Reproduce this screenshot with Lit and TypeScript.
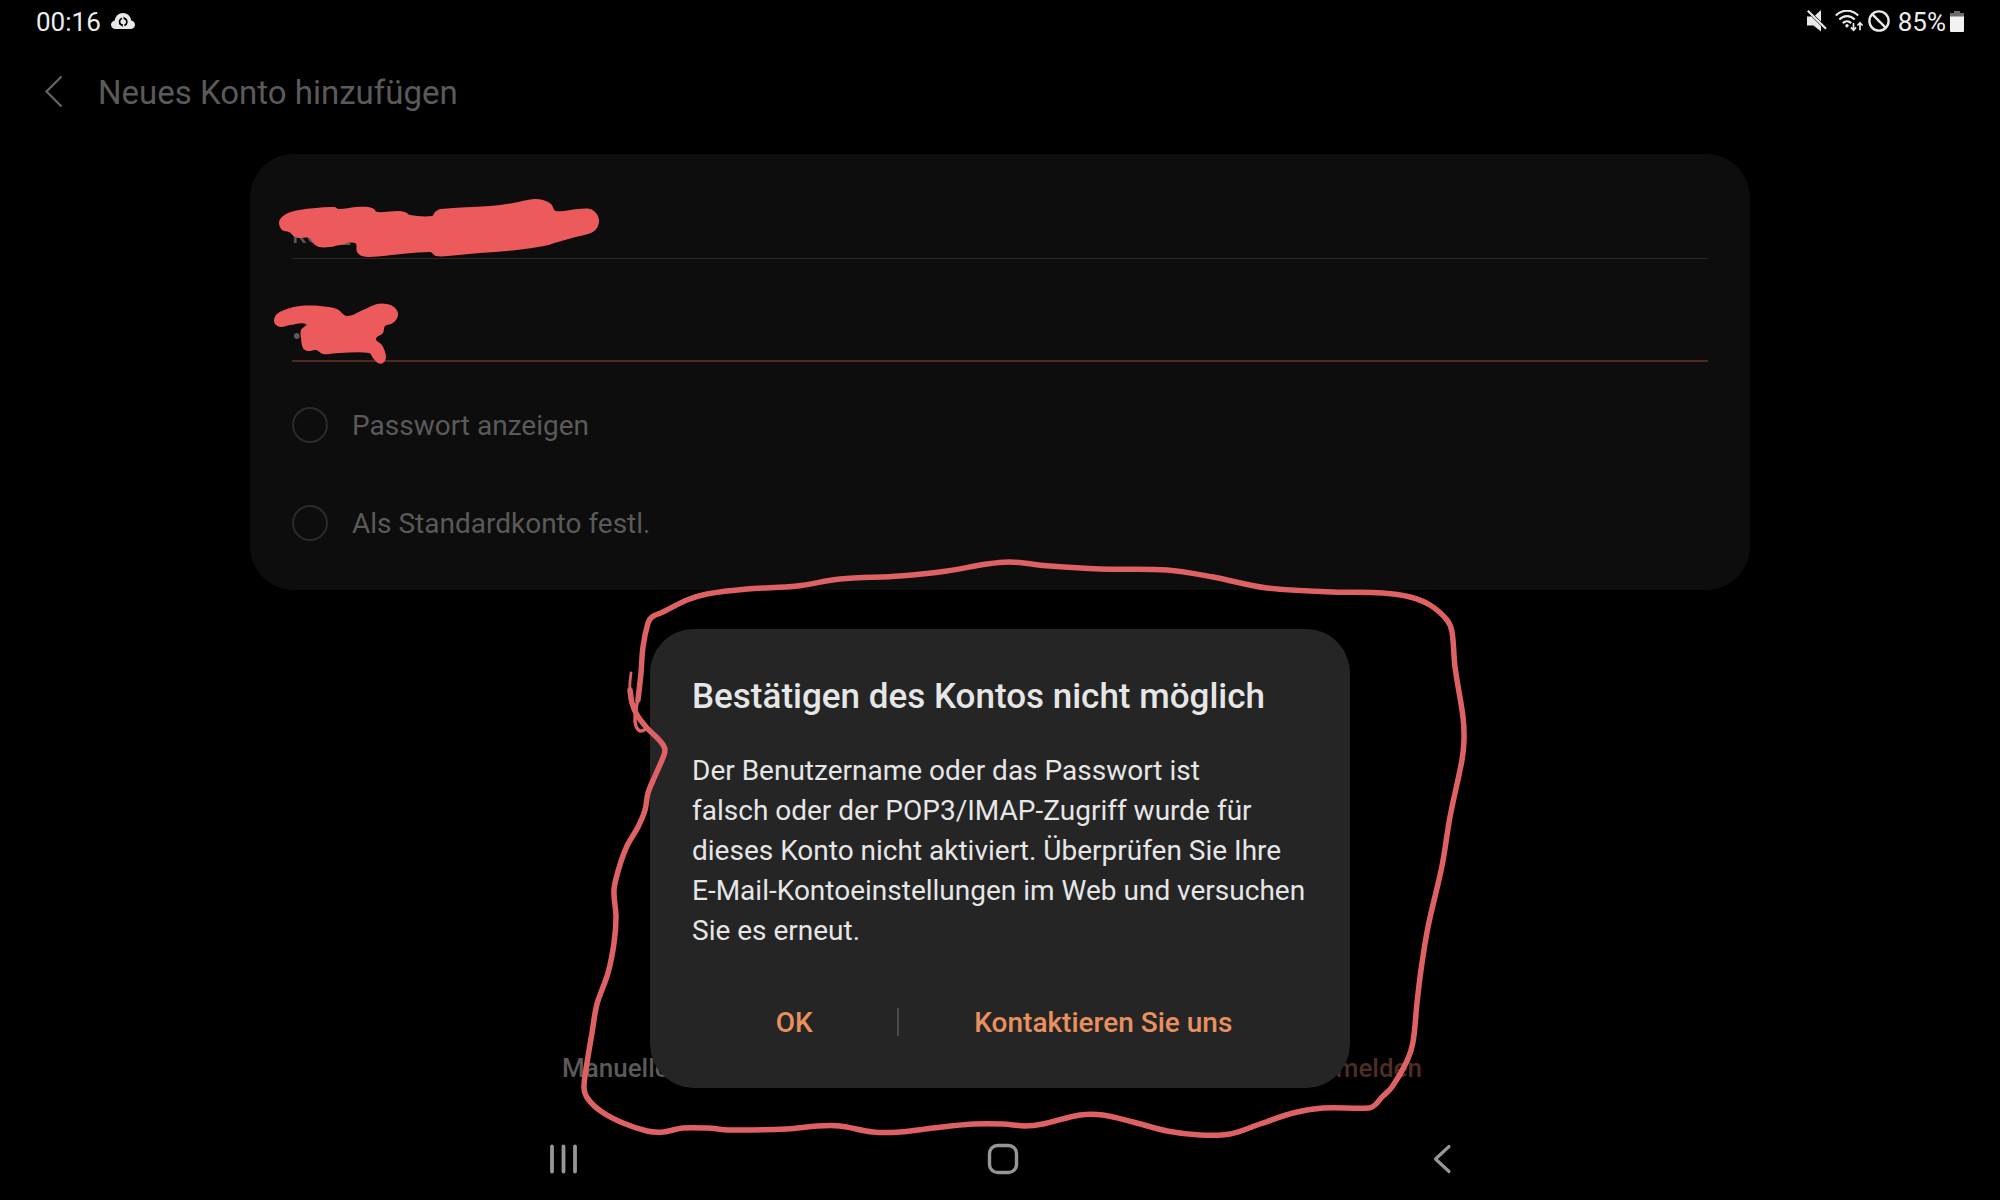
import { LitElement, html, svg, css } from "lit";
import { customElement, state } from "lit/decorators.js";

type Point = [number, number];

/**
 * Turns a list of points into a smooth path. Each tangent follows the
 * neighbouring points, and each handle is a third of its own segment.
 */
function smooth(points: Point[], closed = false): string {
  const n = points.length;
  const at = (i: number): Point =>
    closed ? points[(i + n) % n] : points[Math.max(0, Math.min(n - 1, i))];
  const tangent = (i: number): Point => {
    const a = at(i - 1);
    const c = at(i + 1);
    const len = Math.hypot(c[0] - a[0], c[1] - a[1]) || 1;
    return [(c[0] - a[0]) / len, (c[1] - a[1]) / len];
  };
  let d = `M${points[0][0]} ${points[0][1]}`;
  const last = closed ? n : n - 1;
  for (let i = 0; i < last; i++) {
    const b = at(i);
    const c = at(i + 1);
    const h = Math.hypot(c[0] - b[0], c[1] - b[1]) / 3;
    const s = tangent(i);
    const e = tangent(i + 1);
    d += `C${(b[0] + s[0] * h).toFixed(1)} ${(b[1] + s[1] * h).toFixed(1)} ${(c[0] - e[0] * h).toFixed(1)} ${(c[1] - e[1] * h).toFixed(1)} ${c[0]} ${c[1]}`;
  }
  return closed ? d + "Z" : d;
}

const RING: Point[] = [
  [630, 690], [632, 703], [637, 715], [647, 728], [661, 742], [665, 750], [662, 760], [655, 776],
  [648, 793], [645, 810], [638, 827], [627, 846], [619, 868], [614, 890], [616, 917], [614, 943],
  [608, 973], [597, 1004], [592, 1033], [587, 1063], [584, 1088], [588, 1099], [602, 1112],
  [623, 1123], [647, 1131], [663, 1132], [683, 1128], [707, 1128], [730, 1130], [787, 1129],
  [817, 1126], [840, 1126], [873, 1132], [900, 1132], [933, 1128], [973, 1124], [1003, 1124],
  [1025, 1126], [1043, 1124], [1080, 1115], [1103, 1115], [1133, 1122], [1167, 1131], [1200, 1135],
  [1230, 1134], [1260, 1124], [1293, 1113], [1323, 1108], [1369, 1108], [1375, 1105], [1382, 1097],
  [1392, 1087], [1407, 1061], [1413, 1042], [1417, 1003], [1421, 970], [1428, 927], [1442, 866],
  [1450, 817], [1462, 760], [1464, 740], [1463, 717], [1455, 667], [1452, 632], [1447, 620],
  [1430, 605], [1410, 597], [1383, 593], [1333, 592], [1267, 588], [1213, 577], [1167, 570],
  [1100, 569], [1050, 566], [1010, 562], [987, 564], [947, 571], [900, 576], [840, 579],
  [797, 586], [747, 589], [707, 594], [687, 600], [663, 612], [652, 617], [648, 623],
  [643, 647], [641, 673], [638, 700],
];
const RING_START: Point[] = [[631, 673], [630, 682], [630, 690], [632, 703]];
const RING_END: Point[] = [[638, 698], [635, 717], [636, 726], [640, 731], [646, 729]];

const MARK_TOP: Point[] = [
  [279, 223], [281, 218], [288, 213], [299, 210], [316, 208], [334, 207], [339, 209], [356, 207],
  [368, 207], [374, 209], [377, 212], [398, 211], [405, 212], [410, 215], [432, 216], [435, 212],
  [441, 209], [490, 206], [513, 203], [534, 199], [543, 200], [551, 204], [556, 211], [578, 209],
  [590, 209], [596, 213], [599, 220], [597, 228], [591, 233], [572, 238], [558, 242], [544, 246],
  [517, 250], [480, 253], [448, 256], [436, 256], [430, 252], [370, 257], [362, 256], [357, 252],
  [355, 243], [340, 245], [330, 247], [319, 247], [314, 244], [309, 238], [300, 238], [295, 237],
  [289, 232], [282, 230],
];
const MARK_BOTTOM: Point[] = [
  [274, 320], [277, 314], [287, 309], [300, 306], [320, 306], [337, 309], [347, 316], [363, 310],
  [377, 304], [387, 304], [394, 307], [398, 313], [396, 320], [391, 324], [385, 326], [383, 333],
  [376, 339], [382, 345], [386, 357], [383, 363], [378, 363], [373, 358], [369, 353], [340, 353],
  [323, 354], [316, 350], [308, 351], [303, 348], [301, 338], [301, 330], [306, 324], [290, 325],
  [281, 327], [276, 325],
];

const cloudIcon = html`<svg class="cloud" viewBox="0 0 24 16" aria-hidden="true">
  <path fill="#e9e9e9" d="M4.600 16C2 16 0 14.300 0 11.700 0 9.500 1.600 7.700 3.800 7.400 4.300 3.200 7.800 0 12 0s7.700 3.200 8.200 7.400C22.400 7.700 24 9.500 24 11.700 24 14.300 22 16 19.400 16z"/>
  <path fill="none" stroke="#050505" stroke-width="1.700" d="M11 5.200A3.700 3.700 0 0 0 10.200 11.800M13.400 12.400A3.700 3.700 0 0 0 14.200 5.800"/>
  <path fill="#050505" d="M8.200 11h3.600v3zM16.200 6.600h-3.600v-3z"/>
</svg>`;

const muteIcon = html`<svg class="mute" viewBox="0 0 20 22" aria-hidden="true">
  <path fill="#e9e9e9" d="M0 6.500h4.500L14 16v5.500L6.500 15.500H0zM8 5.500L14 0v11.500z"/>
  <path fill="none" stroke="#e9e9e9" stroke-width="2.200" d="M.8 .8L19 18.800"/>
</svg>`;

const wifiIcon = html`<svg class="wifi" viewBox="0 0 28 22" aria-hidden="true">
  <g fill="none" stroke="#e9e9e9" stroke-width="2.200">
    <path d="M.8 5.600C7 -.9 17 -.9 23.200 5.600"/>
    <path d="M4.300 9.600C8.700 5 15.300 5 19.700 9.600"/>
    <path d="M7.800 13.100C10.300 10.600 13.700 10.600 16.200 13.100"/>
  </g>
  <circle cx="12" cy="15.800" r="1.700" fill="#e9e9e9"/>
  <path fill="none" stroke="#e9e9e9" stroke-width="1.700" d="M18.500 13v7M15.900 17.400l2.600 2.800 2.600-2.800M25 20.200v-7M22.400 15.500l2.600-2.800 2.600 2.800"/>
</svg>`;

const banIcon = html`<svg class="ban" viewBox="0 0 22 22" aria-hidden="true">
  <g fill="none" stroke="#e9e9e9" stroke-width="2.400">
    <circle cx="11" cy="11" r="9.600"/><path d="M4.200 4.200l13.600 13.600"/>
  </g>
</svg>`;

const batteryIcon = html`<svg class="battery" viewBox="0 0 14 21" aria-hidden="true">
  <path fill="#6c6c6c" d="M4 0h6v2h4v4H0V2h4z"/>
  <path fill="#f2f2f2" d="M0 5.500h14V20a1 1 0 0 1-1 1H1a1 1 0 0 1-1-1z"/>
</svg>`;

@customElement("app-root")
export class AppRoot extends LitElement {
  @state() private options = [
    { id: "show-password", label: "Passwort anzeigen" },
    { id: "default-account", label: "Als Standardkonto festl." },
  ];

  static styles = css`
    :host {
      display: flex;
      flex-direction: column;
      position: relative;
      min-height: 100vh;
      box-sizing: border-box;
      overflow: hidden;
      background: #000;
      color: #5a5a5a;
      font-family: Roboto, "Liberation Sans", sans-serif;
      font-size: 28px;
      line-height: 40px;
    }
    svg { display: block; flex: none; }
    button {
      margin: 0;
      padding: 0;
      border: 0;
      background: none;
      color: inherit;
      font: inherit;
    }
    .status {
      display: flex;
      justify-content: space-between;
      align-items: center;
      height: 42px;
      padding: 0 36px;
      color: #ececec;
      font-size: 26px;
    }
    .status span { padding-top: 2px; }
    .group { display: flex; align-items: center; }
    .cloud { width: 24px; height: 16px; margin-left: 10px; }
    .mute { width: 20px; height: 22px; margin-right: 8px; }
    .wifi { width: 28px; height: 22px; margin-right: 5px; }
    .ban { width: 22px; height: 22px; margin-right: 8px; }
    .battery { width: 14px; height: 21px; margin-left: 4px; }
    .header {
      display: flex;
      align-items: center;
      gap: 34px;
      height: 100px;
      padding: 0 44px;
    }
    .header svg { width: 20px; height: 34px; }
    .header h1 {
      margin: 0;
      padding-top: 2px;
      font-size: 33px;
      font-weight: 400;
    }
    .card {
      width: 75%;
      box-sizing: border-box;
      margin: 12px auto 0;
      padding: 0 42px 18px;
      border-radius: 44px;
      background: #0d0d0d;
    }
    .field {
      display: block;
      width: 100%;
      height: 103px;
      box-sizing: border-box;
      margin: 0;
      padding: 54px 0 0;
      border: 0;
      border-bottom: 1px solid #2a2a2a;
      border-radius: 0;
      outline: 0;
      background: none;
      color: #5a5a5a;
      font: inherit;
    }
    .first { height: 105px; }
    .invalid { border-bottom: 2px solid #53281c; }
    .options { padding-top: 14px; }
    .option {
      display: flex;
      align-items: center;
      gap: 24px;
      height: 98px;
    }
    .option input {
      appearance: none;
      width: 36px;
      height: 36px;
      margin: 0;
      border: 2px solid #2b2b2b;
      border-radius: 50%;
    }
    .option span { padding-top: 2px; }
    .spacer { flex: 1; }
    .actions {
      display: flex;
      justify-content: space-between;
      padding: 0 calc(29% - 2px) 30px calc(28% + 2px);
      font-size: 26px;
      font-weight: 500;
    }
    .submit { color: #4e2d25; }
    .nav {
      display: grid;
      grid-template-columns: repeat(3, 22%);
      justify-content: center;
      justify-items: center;
      align-items: center;
      height: 82px;
      padding-left: 6px;
    }
    .nav svg { width: 32px; height: 32px; }
    .overlay {
      position: absolute;
      inset: 0;
      display: flex;
      justify-content: center;
      align-items: flex-end;
      padding-bottom: 112px;
    }
    .dialog {
      width: 35%;
      min-width: max-content;
      box-sizing: border-box;
      padding: 46px 42px 24px;
      border-radius: 44px;
      background: #252525;
      color: #e6e6e6;
    }
    .dialog h2 {
      margin: 0 0 32px;
      font-size: 35px;
      font-weight: 500;
      line-height: 44px;
    }
    .dialog p { margin: 0 0 29px; }
    .choices {
      display: grid;
      grid-template-columns: 1fr 2px 2fr;
      align-items: center;
      height: 84px;
      color: #e8905f;
    }
    .choices button { height: 84px; padding-top: 2px; font-weight: 500; }
    .divider { height: 28px; background: #4a4a4a; }
    .drawing {
      position: absolute;
      inset: 0;
      width: 100%;
      height: 100%;
      pointer-events: none;
    }
  `;

  render() {
    return html`
      <div class="status">
        <div class="group"><span>00:16</span>${cloudIcon}</div>
        <div class="group">
          ${muteIcon}${wifiIcon}${banIcon}<span>85%</span>${batteryIcon}
        </div>
      </div>

      <header class="header">
        <button aria-label="Nach oben">
          <svg viewBox="0 0 20 34"><path d="M17.500 1.500L2.500 16.500l15 15" fill="none" stroke="#666" stroke-width="2.200"/></svg>
        </button>
        <h1>Neues Konto hinzufügen</h1>
      </header>

      <form class="card">
        <input class="field first" type="text" aria-label="E-Mail-Adresse" .value=${"kon_"} />
        <input class="field invalid" type="password" aria-label="Passwort" .value=${"abcde"} />
        <div class="options">
          ${this.options.map(
            (o) => html`<label class="option" for=${o.id}>
              <input type="checkbox" id=${o.id} /><span>${o.label}</span>
            </label>`
          )}
        </div>
      </form>

      <div class="spacer"></div>

      <div class="actions">
        <button>Manuelle</button>
        <button class="submit">Anmelden</button>
      </div>

      <div class="overlay">
        <section class="dialog" role="dialog" aria-labelledby="dialog-title">
          <h2 id="dialog-title">Bestätigen des Kontos nicht möglich</h2>
          <p>
            Der Benutzername oder das Passwort ist<br />
            falsch oder der POP3/IMAP-Zugriff wurde für<br />
            dieses Konto nicht aktiviert. Überprüfen Sie Ihre<br />
            E-Mail-Kontoeinstellungen im Web und versuchen<br />
            Sie es erneut.
          </p>
          <div class="choices">
            <button>OK</button>
            <span class="divider"></span>
            <button>Kontaktieren Sie uns</button>
          </div>
        </section>
      </div>

      <nav class="nav">
        <button aria-label="Letzte Apps">
          <svg viewBox="0 0 32 32"><path d="M4 3.500v25M15.500 3.500v25M27 3.500v25" stroke="#969696" stroke-width="3.800" stroke-linecap="round"/></svg>
        </button>
        <button aria-label="Startseite">
          <svg viewBox="0 0 32 32"><rect x="2.500" y="2.500" width="27" height="27" rx="8" fill="none" stroke="#969696" stroke-width="3.400"/></svg>
        </button>
        <button aria-label="Zurück">
          <svg viewBox="0 0 32 32"><path d="M23 3.500L9.500 16l13.500 12.500" fill="none" stroke="#969696" stroke-width="3.200" stroke-linecap="round" stroke-linejoin="round"/></svg>
        </button>
      </nav>

      <svg class="drawing" viewBox="0 0 2000 1200" aria-hidden="true">
        <g fill="#ec5a5c">
          ${[MARK_TOP, MARK_BOTTOM].map((m) => svg`<path d=${smooth(m, true)}></path>`)}
        </g>
        <g fill="none" stroke="#de6164" stroke-linecap="round" stroke-linejoin="round">
          <path stroke-width="5.500" d=${smooth(RING)}></path>
          <path stroke-width="2.800" d=${smooth(RING_START)}></path>
          <path stroke-width="3.500" d=${smooth(RING_END)}></path>
        </g>
      </svg>
    `;
  }
}
